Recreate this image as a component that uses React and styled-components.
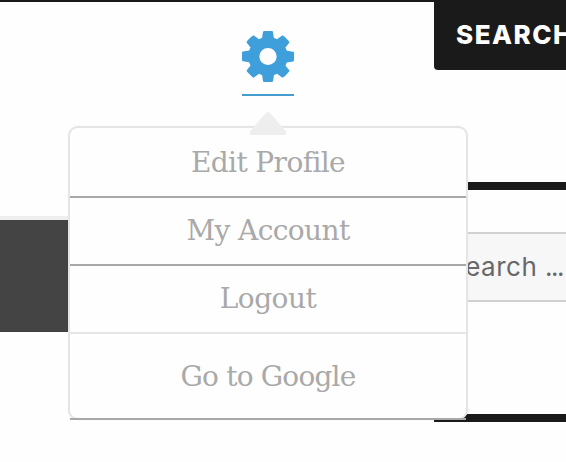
import React from "react";
import styled, { createGlobalStyle } from "styled-components";

const GlobalStyle = createGlobalStyle`
  * { box-sizing: border-box; }
  body { margin: 0; background: #fefefe; overflow: hidden; }
`;

const Page = styled.div`
  position: relative;
  width: 566px;
  height: 462px;
  overflow: hidden;
  border-top: 2px solid #1a1a1a;
  background: #fefefe;
  display: grid;
  grid-template-columns: 434px 132px;
`;

const Main = styled.main`
  display: flex;
  flex-direction: column;
`;

const ProfileLink = styled.a`
  width: 52px;
  height: 94px;
  margin: 0 0 120px 242px;
  padding-top: 29px;
  border-bottom: 2px solid #459dcd;
  color: #3f9fdb;
`;

const Gear = styled.svg`
  display: block;
  width: 52px;
  height: 51px;
  fill: currentColor;
`;

const Banner = styled.div`
  height: 116px;
  border-top: 4px solid #efefef;
  border-bottom: 1px solid #403e40;
  background: #444;
`;

const Sidebar = styled.aside`
  display: flex;
  flex-direction: column;
`;

const SearchButton = styled.button`
  height: 68px;
  margin: 0 0 112px;
  padding: 0 0 2px 22px;
  border: 0;
  border-radius: 0 0 0 4px;
  background: #1a1a1a;
  color: #fff;
  font: 800 26px/64px "Inter", sans-serif;
  letter-spacing: 1.5px;
  text-align: left;
  white-space: nowrap;
`;

const Widget = styled.section`
  height: 240px;
  padding-top: 42px;
  border-top: 8px solid #1a1a1a;
  border-bottom: 8px solid #1a1a1a;
`;

const SearchField = styled.div`
  height: 70px;
  padding-left: 14px;
  border: solid #d1d1d1;
  border-width: 2px 0;
  background: #f7f7f7;
  color: #686868;
  font: 400 26px/66px "Inter", sans-serif;
  letter-spacing: 0.5px;
  white-space: nowrap;
`;

const Dots = styled.span`
  letter-spacing: -1.5px;
`;

const Menu = styled.ul`
  position: absolute;
  top: 124px;
  left: 68px;
  width: 400px;
  height: 294px;
  margin: 0;
  padding: 0;
  list-style: none;
  border: 2px solid #e5e5e5;
  border-radius: 10px;
  background: #fefefe;
  box-shadow: 0 0 2px rgba(0, 0, 0, 0.06);
`;

const Caret = styled.svg`
  position: absolute;
  top: -16px;
  left: 179px;
  width: 38px;
  height: 23px;
  fill: #eee;
`;

const MenuItem = styled.li`
  height: ${(p) => p.$height}px;
  border-bottom: 2px solid ${(p) => (p.$light ? "#e5e5e5" : "#a8a8a8")};
  color: #a9a9a9;
  font: 400 28px/${(p) => p.$line}px "DejaVu Serif", serif;
  letter-spacing: ${(p) => p.$spacing}px;
  text-align: center;
  white-space: nowrap;
`;

const items = [
  { label: "Edit Profile", height: 70, line: 69, spacing: -0.6 },
  { label: "My Account", height: 68, line: 66, spacing: -0.6 },
  { label: "Logout", height: 68, line: 66, spacing: -0.5, light: true },
  { label: "Go to Google", height: 86, line: 85, spacing: -0.8 },
];

export default function App() {
  return (
    <>
      <GlobalStyle />
      <Page>
        <Main>
          <ProfileLink aria-label="Profile settings">
            <Gear viewBox="0 0 1536 1536" preserveAspectRatio="none">
              <path d="M1024 768q0-106-75-181t-181-75-181 75-75 181 75 181 181 75 181-75 75-181zM1536 659v222q0 12-8 23t-20 13l-185 28q-19 54-39 91 35 50 107 138 10 12 10 25t-9 23q-27 37-99 108t-94 71q-12 0-26-9l-138-108q-44 23-91 38-16 136-29 186-7 28-36 28h-222q-14 0-24.5-8.5t-11.5-21.5l-28-184q-49-16-90-37l-141 107q-10 9-25 9-14 0-25-11-126-114-165-168-7-10-7-23 0-12 8-23 15-21 51-66.5t54-70.5q-27-50-41-99l-183-27q-13-2-21-12.5t-8-23.5v-222q0-12 8-23t19-13l186-28q14-46 39-92-40-57-107-138-10-12-10-24 0-10 9-23 26-36 98.5-107.5t94.5-71.5q13 0 26 10l138 107q44-23 91-38 16-136 29-186 7-28 36-28h222q14 0 24.5 8.5t11.5 21.5l28 184q49 16 90 37l142-107q9-9 24-9 13 0 25 10 129 119 165 170 7 8 7 22 0 12-8 23-15 21-51 66.5t-54 70.5q26 50 41 98l183 28q13 2 21 12.5t8 23.5z" />
            </Gear>
          </ProfileLink>
          <Banner />
        </Main>
        <Sidebar>
          <SearchButton>SEARCH</SearchButton>
          <Widget>
            <SearchField>
              Search <Dots>...</Dots>
            </SearchField>
          </Widget>
        </Sidebar>
        <Menu>
          <Caret viewBox="0 0 38 23">
            <path d="M17 1Q19-1 21 1L36 18Q39 23 35 23H3Q-1 23 2 18Z" />
          </Caret>
          {items.map((item) => (
            <MenuItem
              key={item.label}
              $height={item.height}
              $line={item.line}
              $spacing={item.spacing}
              $light={item.light}
            >
              {item.label}
            </MenuItem>
          ))}
        </Menu>
      </Page>
    </>
  );
}
